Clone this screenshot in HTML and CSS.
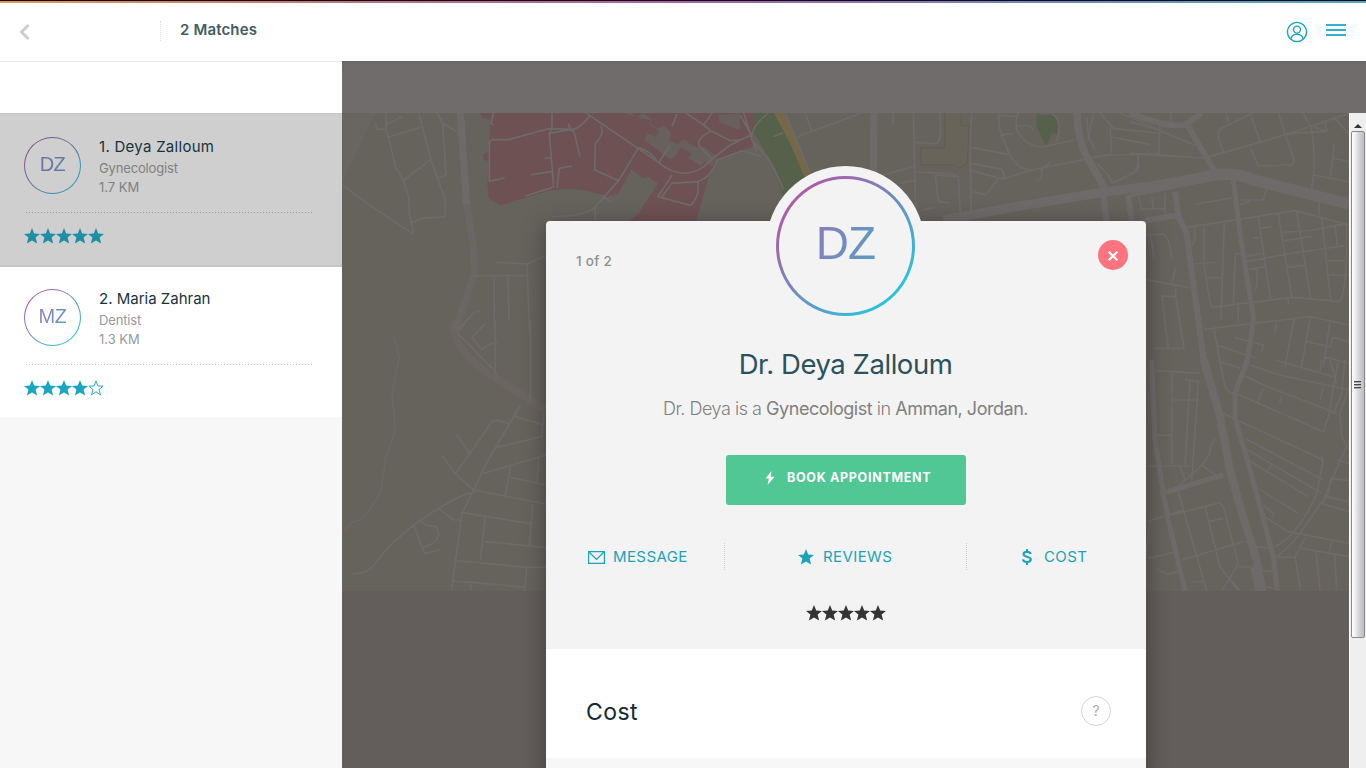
FILE: index.html
```html
<!DOCTYPE html>
<html lang="en">
<head>
<meta charset="utf-8">
<title>2 Matches</title>
<link rel="stylesheet" href="styles.css">
</head>
<body>
<svg class="defs" width="0" height="0">
  <symbol id="star" viewBox="0 0 16 16"><path d="M8 0l2.200 5.500 5.800.4-4.400 3.700 1.500 6L8 12.400l-5.100 3.200 1.500-6L0 5.900l5.800-.4z"/></symbol>
  <symbol id="star-empty" viewBox="0 0 16 16"><path fill="none" stroke="currentColor" stroke-width=".9" d="M8 .9l1.900 5.100 5.300.2-4.200 3.300 1.500 5.300L8 11.800l-4.500 3 1.500-5.300L.8 6.200l5.300-.2z"/></symbol>
</svg>

<div class="rainbow"></div>
<header class="header">
  <svg class="back" width="12" height="18" viewBox="0 0 12 18"><path d="M9.500 2L2.500 9l7 7" fill="none" stroke="#ccc" stroke-width="3"/></svg>
  <div class="matches">2 Matches</div>
  <svg class="user" width="22" height="22" viewBox="0 0 22 22" fill="none" stroke="#1ba3bd" stroke-width="1.400"><circle cx="11" cy="11" r="9.600"/><circle cx="11" cy="8.600" r="3.500"/><path d="M4.700 18.200c.6-3.300 3-4.800 6.300-4.800s5.700 1.500 6.300 4.800"/></svg>
  <div class="burger"><i></i><i></i><i></i></div>
</header>

<div class="main">
  <aside class="sidebar">
    <div class="spacer"></div>
    <article class="match selected">
      <div class="row">
        <div class="avatar"><span>DZ</span></div>
        <div class="info"><h3 class="n1">1. Deya Zalloum</h3><p class="job">Gynecologist</p><p class="km">1.7 KM</p></div>
      </div>
      <div class="stars"><svg><use href="#star"/></svg><svg><use href="#star"/></svg><svg><use href="#star"/></svg><svg><use href="#star"/></svg><svg><use href="#star"/></svg></div>
    </article>
    <article class="match">
      <div class="row">
        <div class="avatar"><span>MZ</span></div>
        <div class="info"><h3 class="n2">2. Maria Zahran</h3><p class="job">Dentist</p><p class="km">1.3 KM</p></div>
      </div>
      <div class="stars"><svg><use href="#star"/></svg><svg><use href="#star"/></svg><svg><use href="#star"/></svg><svg><use href="#star"/></svg><svg><use href="#star-empty"/></svg></div>
    </article>
  </aside>

  <section class="stage">
    <div class="filterbar"></div>
    <svg class="map" viewBox="342 113 1007 478" width="1007" height="478">
      <rect x="342" y="113" width="1007" height="478" fill="#66625c"/>
      <!-- north-west district -->
      <g transform="translate(342 60) scale(.33333)">
        <path fill="#6c6864" opacity=".5" d="M0 150H105L0 370z"/>
        <path fill="#6e5153" d="M415 150H1235L1215 195 1240 255 1125 300 1100 350 1060 490H855L890 460 948 370 915 348 905 355 868 328 830 400 795 412Q720 375 620 392L475 436 440 415 436 370 442 305 425 298 424 282 440 275 446 180 418 172z"/>
        <path fill="#67605c" d="M842 158h26l16 14 20-12 24 14-8 16 28 14 18-8 22 22-6 22 26 12 16-16 26 20 22 8 14-4 40 32-16 28-20-16-16 14-34-24 8-14-30-20-22 34-14 2-76-56 12-20 24 10 10-16-28-18 4-14zM1130 165l60-5 18 25-18 25-58-24z"/>
        <g class="roads" stroke-width="5">
          <path d="M132 158L132 210 140 232 160 320 184 362 200 410 202 460 215 523 90 440 2 376M100 190l5 18h25l5-15 48-24M140 231L236 202M230 158L267 300 310 420V470L240 475 210 488M267 298L184 362M285 158L302 190 312 345 290 354M302 190L345 215"/>
          <path d="M630 158V205L622 220 635 380 620 386 550 408M442 365V245L450 239H500L620 206 695 208Q720 200 745 165M680 190l4 20 12 5 18 75M608 294h18M565 345L630 334M440 364L488 354M645 384L652 325 690 318M622 220L680 210M455 158L447 190 455 196"/>
          <path d="M730 158L885 263 950 308Q1020 365 1085 320L1115 293 1165 255Q1190 240 1230 232M776 198Q790 220 760 250L758 330 830 362 888 266M830 362L760 440Q730 470 630 470M780 405L808 427M760 440V480M890 262Q935 280 945 305M990 345L948 410 1045 436Q1075 410 1067 365L990 370 960 410M990 200l15-38M950 308L985 255M1030 158L1085 195 1110 160M1085 195L1108 213 1165 242 1220 238M1108 213Q1055 240 1075 262L1108 295M1200 158L1225 240M1067 365Q1110 350 1125 300L1200 272 1260 290"/>
          <path d="M462 607L555 612 610 588M385 647H555M555 612L562 810M457 650V810M498 650L501 780M350 806L400 755 416 752"/>
          <path stroke-width="22" d="M355 158L374 435"/>
          <path stroke-width="22" opacity=".5" d="M374 435L394 560 398 640 340 810"/>
        </g>
      </g>
      <!-- south-west district -->
      <g class="roads" transform="translate(342 320) scale(.33333)" stroke-width="5">
        <path opacity=".65" d="M155 48L172 113 150 220 160 330 132 410 116 515 82 570 52 600 28 608 0 642"/>
        <path d="M375 0L347 40 460 155 463 180M430 10L390 53 420 90Q440 67 465 68M460 0V155M565 0V250M343 342L383 400M302 408L340 462 395 510 360 580 328 812M340 462L450 305Q460 297 498 310M535 256L430 435 395 510 612 552M520 290L605 315M605 280L600 350 465 382M425 460L612 405M590 410L585 485M505 440L490 528M505 472L612 495M395 518Q350 520 215 615L140 680 90 742Q70 760 32 762M290 565L335 600H355M235 600L250 615 282 620 290 640Q290 670 242 682M215 615L247 700 293 690M362 578L565 611M430 590L415 722M572 552L562 676M428 665L612 682M342 722L556 742H612M333 782L550 802M554 742L548 812M386 788V812"/>
        <path stroke-width="24" opacity=".45" d="M338 0Q320 70 430 155L610 268"/>
      </g>
      <!-- northern centre -->
      <g transform="translate(740 60) scale(.33333)">
        <path fill="#6e5153" d="M0 150H37L44 195 30 260 0 267z"/>
        <path fill="#55614a" d="M40 150H130L205 350 130 410 100 315 40 215zM890 165h50l18 20-6 38-15-5-18 40-30-60z"/>
        <path fill="#756849" d="M97 150H130L215 342 195 355 155 260z"/>
        <path fill="#68645a" stroke="#5e5a55" stroke-width="2" d="M615 150h48v47h24l-5 112-22 15-20-10h-98v-50h73z"/>
        <g class="roads" stroke-width="5">
          <path d="M85 160Q30 200 35 240L75 285Q105 320 130 390M0 165L35 225 0 240M10 155L35 235 50 275M100 230L128 218M135 158L215 350M195 158L215 212M172 230L375 155M460 158L459 195M520 158L528 490M600 158L602 215Q600 250 585 252L525 247M530 336L640 342 655 350 662 480M586 345L595 425 630 428M588 345L655 350M695 158L690 260 694 455M430 345L520 320M480 370L522 362M545 450L585 442M694 262L803 283M694 310L785 328Q800 350 785 357L694 332M700 395L737 404 775 358M775 158L780 210 805 275Q830 330 875 330M780 230Q790 220 820 222M775 165L830 170 835 158M830 165L828 205Q850 255 905 261L1005 240M830 200Q870 190 880 208M935 160Q970 180 950 245M875 330L1035 298M790 357L875 330M930 308L905 330V352L890 364M1040 170L1045 225 1065 272M1040 295L1105 285 1260 282M1060 158L1045 240M1110 190L1115 280M1110 230L1230 254M1080 158L1120 205 1260 220M1195 285V330Q1150 355 1115 370M1070 310Q1110 345 1118 370M1140 158L1260 210"/>
          <path stroke-width="22" d="M402 158L400 350M1012 158Q1010 230 1040 290L1095 385"/>
          <path stroke-width="28" d="M610 480L800 445 1100 395 1260 375"/>
          <path stroke-width="18" d="M1090 400L1100 485M1165 405L1175 485"/>
        </g>
      </g>
      <!-- north-east district -->
      <g class="roads" transform="translate(1130 100) scale(.33333)" stroke-width="5">
        <path d="M0 65L85 90 200 138M0 122L60 132M90 70L86 160M0 160L235 175M25 165Q25 220 0 225M122 39V65M288 39L296 68M370 39L268 88Q258 100 280 155L240 170 480 100 657 40M365 50L390 125M445 39L492 180Q492 195 480 195L385 198 362 145M520 39L545 90Q560 180 545 270M610 50L655 100M535 75l55 20-5-30M480 100L590 95M612 135L602 232M612 175L657 185M552 225L657 246M198 312L305 294M410 265L400 300H330M330 315L360 302M568 300V345M170 382L495 332 657 375M385 352L422 600M370 415L388 412M392 385L425 380M445 342L485 590M500 335L542 595M460 397L550 390 650 370M462 422L545 410M575 355L602 600M615 375L622 435M650 375Q650 570 632 600 620 608 600 602L485 592 245 622Q240 620 222 490L222 375M350 485L470 462 645 437M345 470L395 460M355 508L405 500M470 502L522 496M595 482H645M598 525H657M475 592V612M283 365L273 660M316 465L310 610M315 462H340M190 492L257 486M232 533L280 534M192 380Q200 430 183 435M380 505V550Q382 570 370 570M50 405L95 402Q120 405 125 480M63 410L72 475M48 538L175 563M125 550L137 505M95 585L115 745M95 588L137 590 162 745H72M137 565V590M25 290L35 328 105 325M65 290L70 325M105 280V340M222 688L540 650 657 675M325 615V670M252 690L275 810M312 712L400 735 395 755M260 735L380 775M270 785L330 805M440 660L435 700M492 658L465 800M540 655L515 800M600 665L580 800M530 725L600 740 610 712 657 725M580 770L657 790"/>
        <path stroke-width="34" d="M0 275L220 232Q310 210 370 240L657 312"/>
        <path stroke-width="18" d="M0 39Q130 90 170 72L215 39M170 72L255 215M135 275L145 350 170 400 225 810M45 362L145 345"/>
        <path stroke-width="15" d="M310 240L330 400 370 650Q365 720 345 810"/>
      </g>
      <!-- south-east district -->
      <g class="roads" transform="translate(1130 360) scale(.33333)" stroke-width="5">
        <path d="M75 32L210 40M125 38V312M125 120H200M165 58L205 65 185 365M180 60L165 320M80 226H125M50 318H180M215 315Q150 380 125 390M255 235L240 260Q245 285 215 315L265 350M150 320L165 360M145 395L160 450 50 485M160 450L230 692M125 465L270 428Q285 440 290 480L325 610Q310 640 275 692M225 440L270 620 325 692M235 485L280 475M155 600L340 545M60 480L48 590Q50 600 135 575M82 627L112 643 145 635M185 665L218 665M325 622L370 620M300 657L330 690"/>
        <path d="M270 5L285 80Q300 105 310 97L580 215 595 170 625 0M268 155L580 300 560 400Q510 520 435 560M340 45L400 75 620 160M360 15L450 45 657 90M435 0L610 50M400 85L382 130M455 110L448 130M580 80L570 120M345 235L580 360M345 265L575 400M355 300L535 410M375 380L505 460M395 465L475 515 657 550M415 330L425 315M400 435L432 462 425 472M440 590Q480 560 510 520L580 420 657 240M630 160L635 230 657 270M657 80L630 160M600 360L598 395 575 430 657 455M620 300L657 310M590 410L657 425M525 535L495 590 512 692M440 592H495M515 565L657 590M605 545L598 575M558 572L570 692M614 580L620 692M375 560L430 565M395 632H430M410 680L450 690M575 285V305M515 0V20M575 0L570 35M600 0L620 70M645 0L635 100 610 160M600 355L657 362"/>
        <path stroke-width="24" d="M222 0L270 170 300 330 330 440 380 600 395 700"/>
        <path stroke-width="34" d="M378 620L394 700"/>
        <path stroke-width="15" d="M352 0L315 100V175L340 260 380 400 430 590 442 692M65 0L75 240 100 400 115 480 165 692M90 402L280 345"/>
      </g>
    </svg>
    <div class="scrollbar"><div class="up"></div><div class="thumb"><i></i><i></i><i></i></div></div>

    <div class="modal">
      <div class="top">
        <div class="halo"><div class="ring"><span>DZ</span></div></div>
        <div class="bar"><span class="count">1 of 2</span><div class="close"><svg width="12" height="12" viewBox="0 0 12 12"><path d="M1.700 1.700l8.600 8.600M10.300 1.700l-8.600 8.600" stroke="#fff" stroke-width="2.200"/></svg></div></div>
        <h1><span>Dr. Deya Zalloum</span></h1>
        <p class="bio">Dr. Deya is a <b>Gynecologist</b> in <b>Amman, Jordan.</b></p>
        <div class="book"><svg width="10" height="14" viewBox="0 0 10 14"><path fill="#fff" d="M6.500 0L.5 7.600h3.300L2.600 14 9.500 5.700H5.700z"/></svg><span>BOOK APPOINTMENT</span></div>
        <nav class="tabs">
          <div class="tab t1"><svg width="17" height="13" viewBox="0 0 17 13" fill="none" stroke="#1ba3b8" stroke-width="1.200"><path d="M.6.6h15.800v11.800H.6zM1.500 1.500l7 7 7-7"/></svg><span>MESSAGE</span></div>
          <div class="tab t2"><svg width="16" height="16"><use href="#star"/></svg><span>REVIEWS</span></div>
          <div class="tab t3"><svg width="10" height="16" viewBox="0 0 10 16" fill="none" stroke="#1ba3b8" stroke-width="2.100"><path d="M8.600 5C8.200 3.500 6.800 2.900 5 2.900c-2.100 0-3.400.8-3.400 2.300C1.600 8.500 8.800 6.800 8.800 10.500 8.800 12.200 7.300 13 5 13s-3.700-.8-4-2.600M5 0v3.200M5 12.700V16"/></svg><span>COST</span></div>
        </nav>
        <div class="stars dark"><svg><use href="#star"/></svg><svg><use href="#star"/></svg><svg><use href="#star"/></svg><svg><use href="#star"/></svg><svg><use href="#star"/></svg></div>
      </div>
      <div class="cost"><h2>Cost</h2><div class="help">?</div></div>
      <div class="rest"></div>
    </div>
  </section>
</div>
</body>
</html>
```
FILE: styles.css
```css
* { box-sizing: border-box; margin: 0; padding: 0; }
body {
  width: 1366px; height: 768px; overflow: hidden;
  display: flex; flex-direction: column;
  font-family: Inter, "Liberation Sans", sans-serif; background: #f7f7f7;
}
.defs { position: absolute; }
h1, h2, h3 { font-weight: 400; }
.rainbow {
  height: 3px; flex: none;
  background: linear-gradient(#1a0712 0 1px, transparent 1px), linear-gradient(90deg, #dc9a55, #b8777c 25%, #a066a4 50%, #6f87bb 75%, #4fa9c0);
}
.header { height: 58px; flex: none; background: #fff; display: flex; align-items: flex-start; padding-right: 20px; }
.back { margin: 20px 0 0 19px; }
.matches {
  margin: 18px auto 0 129px; height: 20px; padding-left: 19px;
  border-left: 1px dotted #ddd; color: #435c65;
  font-size: 15px; font-weight: 600; line-height: 18px; letter-spacing: .15px;
}
.user { margin-top: 18px; margin-right: 18px; }
.burger { width: 20px; margin-top: 21px; display: flex; flex-direction: column; gap: 3px; }
.burger i { height: 2px; background: #2fb4cc; }

.main { flex: 1; display: flex; min-height: 0; }
.sidebar { width: 342px; background: #f7f7f7; }
.spacer { height: 52px; background: #fff; border-top: 1px solid #e6e6e6; }
.match { height: 150px; padding: 22px 29px 0 24px; background: #fff; }
.match.selected { height: 154px; padding-top: 23px; background: #cfcfcf; border-top: 1px solid #c5c5c5; border-bottom: 2px solid #c5c5c5; }
.row { display: flex; gap: 18px; height: 76px; background: repeating-linear-gradient(90deg, #c8c8c8 0 1px, transparent 1px 3px) 2px 100% / 286px 1px no-repeat; }
.selected .row { background-image: repeating-linear-gradient(90deg, #9c9c9c 0 1px, transparent 1px 3px); }
.avatar {
  width: 57px; height: 57px; border-radius: 50%; flex: none;
  display: flex; align-items: center; justify-content: center; border: 1.500px solid transparent;
  background: linear-gradient(#fff, #fff) padding-box, linear-gradient(135deg, #b05aa5 10%, #6e8dc0 50%, #2cc5de 90%) border-box;
}
.selected .avatar { background: linear-gradient(#cfcfcf, #cfcfcf) padding-box, linear-gradient(135deg, #8d4b8a 10%, #60789f 50%, #25a3b8 90%) border-box; }
.avatar span {
  font: 20px/24px "Liberation Sans", sans-serif; color: transparent; letter-spacing: -.5px; padding-bottom: 3px;
  background: linear-gradient(110deg, #8b80b8, #5d9bc2); -webkit-background-clip: text; background-clip: text;
}
.selected .avatar span { background-image: linear-gradient(110deg, #746da2, #5a80a5); }
.info h3 { font-size: 15px; line-height: 20px; color: #17333d; white-space: nowrap; }
.info .n1 { letter-spacing: .28px; }
.info p { font-size: 13px; line-height: 19px; color: #999; margin: 0; }
.info .job { margin-top: 2px; letter-spacing: -.15px; }
.info .km { letter-spacing: 0; }
.info .n1 ~ p { color: #808080; }
.stars { display: flex; height: 16px; margin-top: 15px; color: #1ba3b8; fill: #1ba6bf; }
.selected .stars { fill: #1c8fa3; }
.stars svg { width: 16px; height: 16px; }

.stage {
  flex: 1; position: relative; background: #635e5b;
  display: grid; grid-template: 52px 1fr / 1007px 17px;
}
.filterbar { grid-column: 1 / 3; background: linear-gradient(#686564, #706c6b 4px); }
.map { display: block; }
.roads { fill: none; stroke: #6e6a69; stroke-linejoin: round; }
.scrollbar { background: #efefef; border-left: 1px solid #fff; padding: 0 1px; display: flex; flex-direction: column; }
.up { height: 18px; flex: none; display: flex; justify-content: center; }
.up::before { content: ""; margin-top: 7px; height: 4px; border: 4px solid transparent; border-top: 0; border-bottom: 4px solid #333; }
.thumb {
  height: 507px; border: 1px solid #888; border-radius: 2px; background: linear-gradient(90deg, #fff, #ececee 30%, #d5d6d9 55%, #bcbec2);
  display: flex; flex-direction: column; align-items: center; justify-content: center; gap: 1px; padding-right: 2px;
}
.thumb i { width: 7px; height: 2px; border-top: 1px solid #444; background: #aaa; }

.modal {
  position: absolute; left: 204px; top: 160px; width: 600px; height: 560px;
  display: flex; flex-direction: column; box-shadow: 0 5px 24px rgba(0,0,0,.35); border-radius: 4px;
}
.top { height: 428px; background: #f3f3f3; border-radius: 4px 4px 0 0; position: relative; }
.halo { position: absolute; left: 220px; top: -55px; width: 159px; height: 160px; border-radius: 50%; background: #f3f3f3; padding: 10px; }
.ring {
  width: 139px; height: 140px; border-radius: 50%; border: 3px solid transparent; display: flex; align-items: center; justify-content: center;
  background: linear-gradient(#f3f3f3, #f3f3f3) padding-box, linear-gradient(135deg, #b05aa5 14%, #6e8dc0 50%, #27c5dc 86%) border-box;
}
.ring span {
  font: 46px/52px "Liberation Sans", sans-serif; letter-spacing: -1px; padding-bottom: 7px; color: transparent;
  background: linear-gradient(110deg, #8b7cb8, #559fc4); -webkit-background-clip: text; background-clip: text;
}
.bar { display: flex; justify-content: space-between; padding: 19px 18px 0 30px; height: 124px; }
.count { font-size: 13.500px; font-weight: 500; line-height: 42px; color: #8f8f8f; letter-spacing: .3px; }
.close { width: 30px; height: 30px; border-radius: 50%; background: #fd7380; display: flex; align-items: center; justify-content: center; padding: 1px 1px 0 0; }
h1 { font-size: 27.500px; line-height: 38px; color: #29525e; text-align: center; letter-spacing: -.45px; padding-right: 1px; }
.bio { margin-top: 14px; font-size: 18px; line-height: 24px; font-weight: 300; text-align: center; color: #808080; letter-spacing: -.47px; padding-right: 1px; }
.bio b { font-weight: 400; }
.book {
  width: 240px; height: 50px; margin: 34px 0 0 180px; border-radius: 3px; background: #50c795; color: #fff;
  display: flex; padding: 13px 0 0 39px; gap: 12px;
}
.book svg { margin-top: 3px; }
.book span { font-size: 12.500px; font-weight: 700; line-height: 19px; letter-spacing: .7px; white-space: nowrap; }
.tabs { display: grid; grid-template-columns: 179px 242px 1fr; height: 26px; margin-top: 38px; color: #1ba3b8; }
.tab { display: flex; align-items: center; font-size: 15px; line-height: 26px; letter-spacing: .4px; padding-top: 1px; fill: #1ba3b8; border-right: 1px dotted #ccc; }
.t1 { padding-left: 42px; gap: 8px; }
.t2 { padding-left: 73px; gap: 9px; }
.t3 { padding-left: 55px; gap: 12px; border: 0; }
.stars.dark { justify-content: center; margin: 36px 1px 0 0; fill: #333; }
.cost { height: 109px; background: #fff; display: flex; justify-content: space-between; padding: 47px 35px 0 40px; }
h2 { font-size: 23px; line-height: 32px; color: #112a33; letter-spacing: .4px; }
.help { width: 30px; height: 30px; border: 1px solid #d2d2d2; border-radius: 50%; text-align: center; font-size: 14px; line-height: 28px; color: #aaa; }
.rest { flex: 1; background: #f7f7f7; }
```
